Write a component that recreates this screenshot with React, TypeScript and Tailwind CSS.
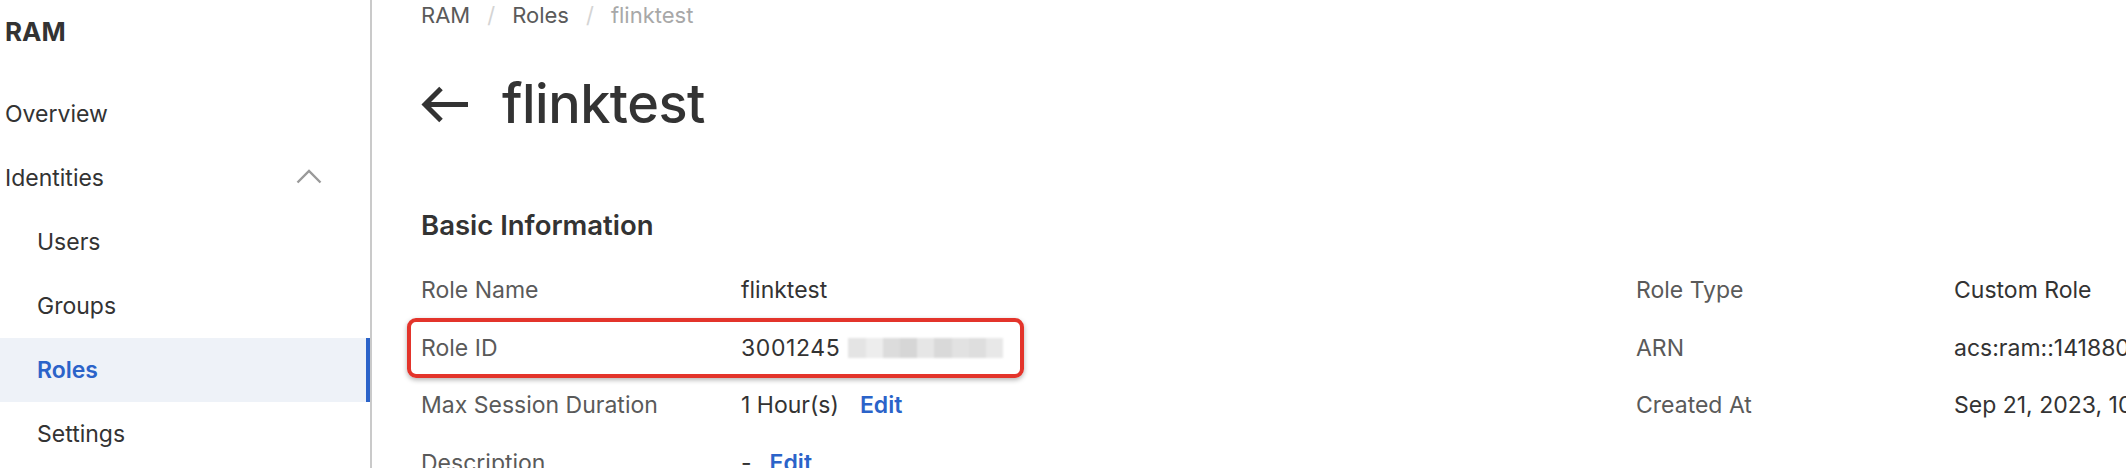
const NAV = [
  { label: 'Overview',   sub: false, active: false, chevron: false },
  { label: 'Identities', sub: false, active: false, chevron: true  },
  { label: 'Users',      sub: true,  active: false, chevron: false },
  { label: 'Groups',     sub: true,  active: false, chevron: false },
  { label: 'Roles',      sub: true,  active: true,  chevron: false },
  { label: 'Settings',   sub: true,  active: false, chevron: false },
]

const BLUR = ['#e4e4e4', '#ededed', '#dcdcdc', '#d6d6d6', '#e6e6e6', '#d9d9d9', '#e2e2e2', '#dedede', '#e8e8e8']

export default function App() {
  return (
    <div
      className="flex h-[468px] w-[2126px] overflow-hidden bg-white text-[#333]"
      style={{ fontFamily: 'Inter, "Noto Sans", sans-serif' }}
    >
      {/* ── Sidebar ── */}
      <aside className="w-[372px] shrink-0 border-r-2 border-[#cacaca]">
        <div className="flex h-[64px] items-center pl-[5px] text-[26px] font-bold leading-none">
          RAM
        </div>
        <nav className="mt-[18px]">
          {NAV.map((item) => (
            <div
              key={item.label}
              className={
                'flex h-[64px] items-center pr-[48px] text-[23px] leading-none ' +
                (item.sub ? 'pl-[37px] ' : 'pl-[5px] ') +
                (item.active
                  ? 'border-r-4 border-[#2b63c9] bg-[#eef2f8] font-semibold text-[#2b63c9]'
                  : 'text-[#333]')
              }
            >
              <span className="flex-1">{item.label}</span>
              {item.chevron && (
                <svg width="26" height="15" viewBox="0 0 26 15" fill="none" className="-mt-[3px]">
                  <polyline points="1.5,13.5 13,2 24.5,13.5" stroke="#9a9a9a" strokeWidth="2.4" />
                </svg>
              )}
            </div>
          ))}
        </nav>
      </aside>

      {/* ── Main ── */}
      <main className="min-w-0 flex-1 pl-[49px]">
        {/* Breadcrumb */}
        <div className="flex h-[30px] items-center gap-[17px] text-[22px] leading-none">
          <span className="text-[#5a5a5a]">RAM</span>
          <span className="text-[#d4d4d4]">/</span>
          <span className="text-[#5a5a5a]">Roles</span>
          <span className="text-[#d4d4d4]">/</span>
          <span className="text-[#a8a8a8]">flinktest</span>
        </div>

        {/* Title */}
        <div className="mt-[44px] flex h-[60px] items-center gap-[34px]">
          <svg width="47" height="37" viewBox="0 0 47 37" fill="none">
            <path d="M47 18.5H4" stroke="#333" strokeWidth="5" />
            <path d="M20 2.5L4 18.5L20 34.5" stroke="#333" strokeWidth="5" />
          </svg>
          <h1 className="text-[54px] font-medium leading-none tracking-[-0.5px] text-[#333]">
            flinktest
          </h1>
        </div>

        {/* Basic Information */}
        <h2 className="mt-[76px] flex h-[32px] items-center text-[27.5px] font-semibold leading-none text-[#333]">
          Basic Information
        </h2>

        <div className="relative mt-[20px] text-[23px] leading-none">
          {/* highlight annotation */}
          <div className="pointer-events-none absolute left-[-14px] top-[55.5px] h-[60px] w-[617px] rounded-[9px] border-4 border-[#e3342b] shadow-[0_2px_5px_rgba(0,0,0,0.3)]" />

          <div className="grid grid-cols-[320px_895px_318px_1fr] whitespace-nowrap [&>div]:flex [&>div]:h-[57.5px] [&>div]:items-center">
            <div className="text-[#5a5a5a]">Role Name</div>
            <div>flinktest</div>
            <div className="text-[#5a5a5a]">Role Type</div>
            <div>Custom Role</div>

            <div className="text-[#5a5a5a]">Role ID</div>
            <div>
              <span className="tracking-[0.6px]">3001245</span>
              <span className="ml-[8px] flex h-[20px] w-[155px] blur-[1px]">
                {BLUR.map((c, i) => (
                  <span key={i} className="flex-1" style={{ background: c }} />
                ))}
              </span>
            </div>
            <div className="text-[#5a5a5a]">ARN</div>
            <div>acs:ram::1418800000000000:role/flinktest</div>

            <div className="text-[#5a5a5a]">Max Session Duration</div>
            <div>
              1 Hour(s)
              <span className="ml-[21px] font-semibold text-[#2b63c9]">Edit</span>
            </div>
            <div className="text-[#5a5a5a]">Created At</div>
            <div>Sep 21, 2023, 10:32:15</div>

            <div className="text-[#5a5a5a]">Description</div>
            <div>
              -
              <span className="ml-[18px] font-semibold text-[#2b63c9]">Edit</span>
            </div>
            <div />
            <div />
          </div>
        </div>
      </main>
    </div>
  )
}
